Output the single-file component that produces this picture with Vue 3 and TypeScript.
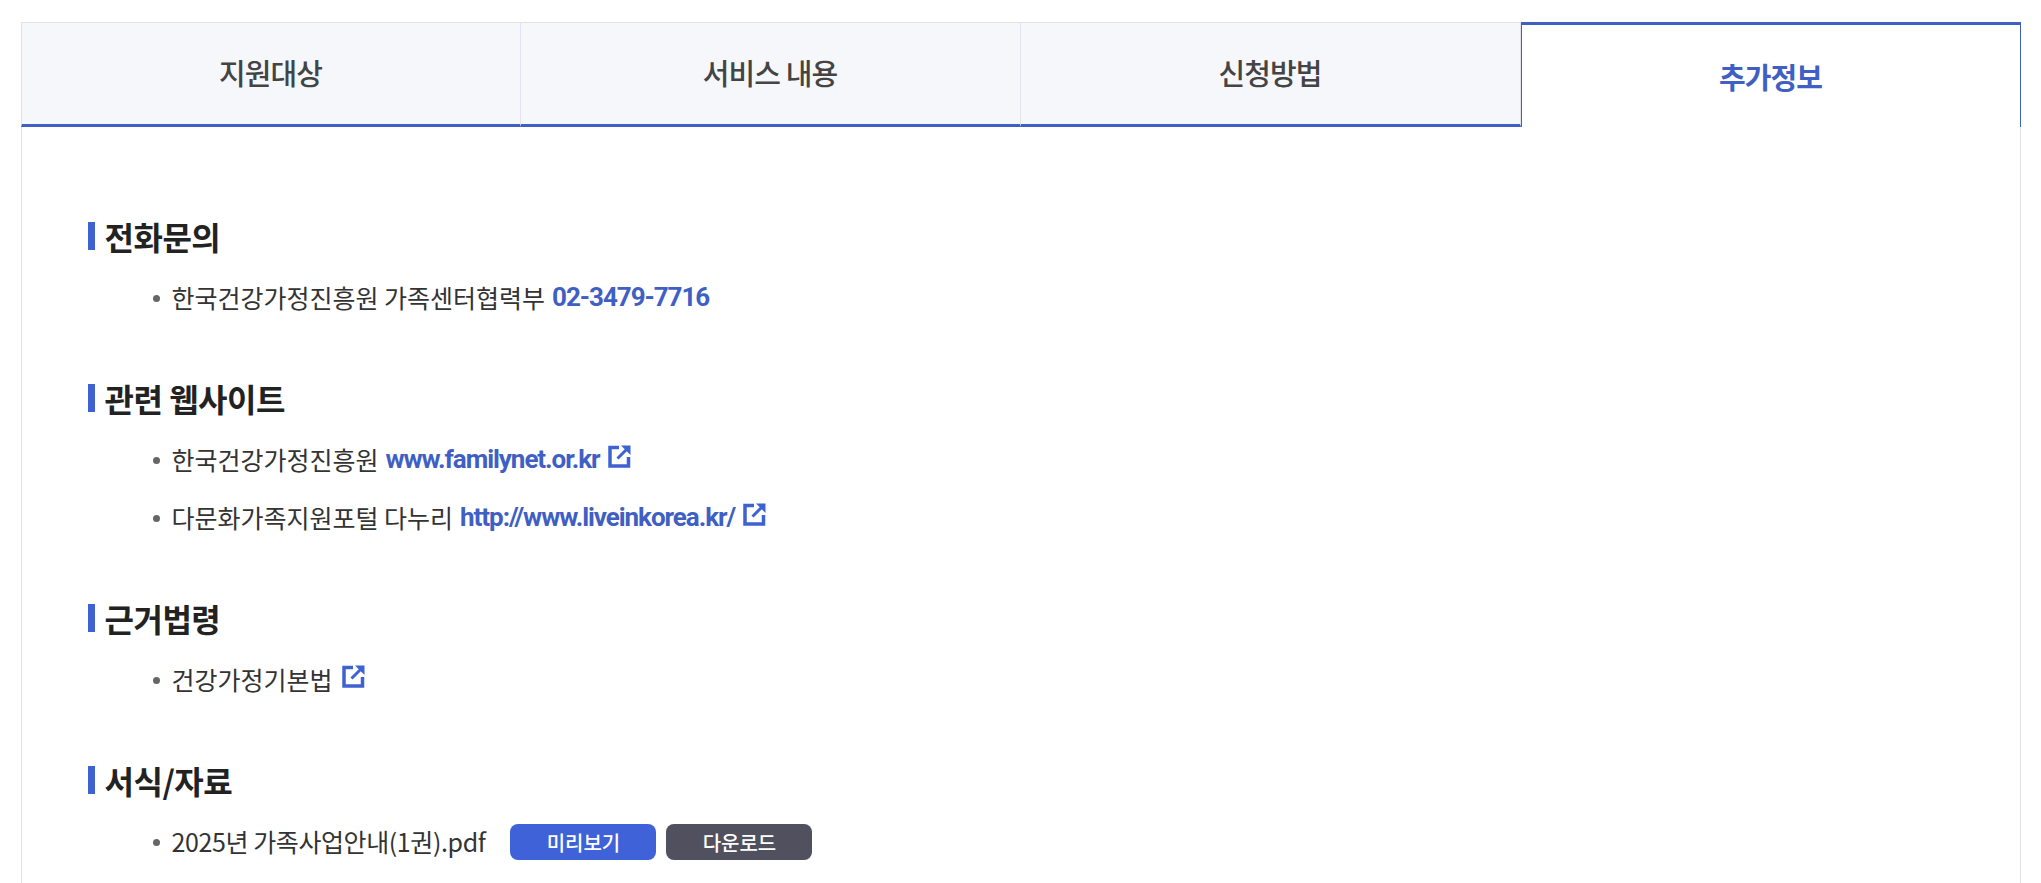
<script setup lang="ts">
import { ref } from 'vue';

interface Row {
    text?: string;
    tel?: string;
    link?: string;
    ext?: boolean;
    file?: boolean;
}

const tabs = ['지원대상', '서비스 내용', '신청방법', '추가정보'];
const current = ref(3);

const sections: { title: string; rows: Row[] }[] = [
    { title: '전화문의', rows: [{ text: '한국건강가정진흥원 가족센터협력부', tel: '02-3479-7716' }] },
    {
        title: '관련 웹사이트',
        rows: [
            { text: '한국건강가정진흥원', link: 'www.familynet.or.kr', ext: true },
            { text: '다문화가족지원포털 다누리', link: 'http://www.liveinkorea.kr/', ext: true },
        ],
    },
    { title: '근거법령', rows: [{ text: '건강가정기본법', ext: true }] },
    { title: '서식/자료', rows: [{ text: '2025년 가족사업안내(1권).pdf', file: true }] },
];
</script>

<template>
    <div class="wrap">
        <ul class="tabs">
            <li v-for="(tab, i) in tabs" :key="tab" class="tab" :class="{ on: i === current }" @click="current = i">
                {{ tab }}
            </li>
        </ul>
        <div class="panel">
            <section v-for="sec in sections" :key="sec.title" class="section">
                <h3 class="title">{{ sec.title }}</h3>
                <ul class="rows">
                    <li v-for="row in sec.rows" :key="row.text" class="row">
                        <span :class="{ name: row.file }">{{ row.text }}</span>
                        <a v-if="row.tel" class="blue">{{ row.tel }}</a>
                        <a v-if="row.link" class="blue">{{ row.link }}</a>
                        <svg v-if="row.ext" class="ext" viewBox="0 0 24 24" fill="none">
                            <path d="M11 3.5H2V22H20.5V13" stroke="#3f62d3" stroke-width="3.5" />
                            <path d="M9.5 14.5L19 5" stroke="#3f62d3" stroke-width="3" />
                            <path d="M13 1.5H22.5V11Z" fill="#3f62d3" />
                        </svg>
                        <template v-if="row.file">
                            <button class="btn view">미리보기</button>
                            <button class="btn down">다운로드</button>
                        </template>
                    </li>
                </ul>
            </section>
        </div>
    </div>
</template>

<style scoped>
.wrap {
    width: 2000px;
    height: 883px;
    margin: 0 auto;
    padding-top: 22px;
    box-sizing: border-box;
    overflow: hidden;
    font-family: "Noto Sans CJK KR", sans-serif;
}

.tabs {
    display: flex;
    margin: 0;
    padding: 0;
    list-style: none;
}

.tab {
    flex: 0 0 25%;
    height: 105px;
    box-sizing: border-box;
    display: flex;
    align-items: center;
    justify-content: center;
    padding-bottom: 3px;
    background-color: #f5f7fb;
    border-top: 1px solid #e2e2e2;
    border-right: 1px solid #e1e4ec;
    border-bottom: 3px solid #3f5fc4;
    font-size: 29px;
    font-weight: 500;
    letter-spacing: -0.9px;
    color: #444;
    cursor: pointer;
}

.tab:first-child {
    border-left: 1px solid #e2e2e2;
}

.tab.on {
    background-color: #fff;
    border: 1px solid #3f5fc4;
    border-top: 3px solid #3f5fc4;
    border-bottom: 0;
    padding-bottom: 0;
    font-weight: 700;
    color: #3f5fc4;
}

.panel {
    height: 800px;
    box-sizing: border-box;
    padding: 95px 66px 0;
    border-left: 1px solid #e2e2e2;
    border-right: 1px solid #e2e2e2;
}

.section {
    margin-bottom: 58px;
}

.title {
    display: flex;
    align-items: center;
    height: 28px;
    margin: 0;
    padding-left: 17px;
    position: relative;
    font-size: 32px;
    font-weight: 700;
    letter-spacing: -0.5px;
    color: #222;
}

.title::before {
    content: '';
    position: absolute;
    left: 0;
    top: 0;
    width: 7px;
    height: 28px;
    background-color: #3f62d3;
}

.rows {
    margin: 0;
    padding: 18px 0 0 65px;
    list-style: none;
}

.row {
    display: flex;
    align-items: center;
    height: 58px;
    position: relative;
    padding-left: 19px;
    font-size: 25px;
    color: #333;
}

.row::before {
    content: '';
    position: absolute;
    left: 0;
    top: 27px;
    width: 7px;
    height: 7px;
    border-radius: 50%;
    background-color: #666;
}

.name {
    letter-spacing: -0.4px;
}

.blue {
    margin-left: 7px;
    font-family: Roboto, "Noto Sans CJK KR", sans-serif;
    font-size: 26px;
    font-weight: 700;
    letter-spacing: -1.05px;
    color: #3f5fc4;
}

.ext {
    width: 24px;
    height: 24px;
    margin: -6px 0 0 9px;
}

.blue + .ext {
    margin-left: 8px;
}

.btn {
    height: 36px;
    width: 146px;
    margin: 2px 0 0 10px;
    padding: 0;
    border: 0;
    border-radius: 8px;
    font-family: inherit;
    font-size: 20px;
    font-weight: 500;
    color: #fff;
    cursor: pointer;
}

.btn.view {
    margin-left: 25px;
    background-color: #3f62d8;
}

.btn.down {
    background-color: #50505e;
}
</style>

<style>
body {
    overflow: hidden;
}
</style>
